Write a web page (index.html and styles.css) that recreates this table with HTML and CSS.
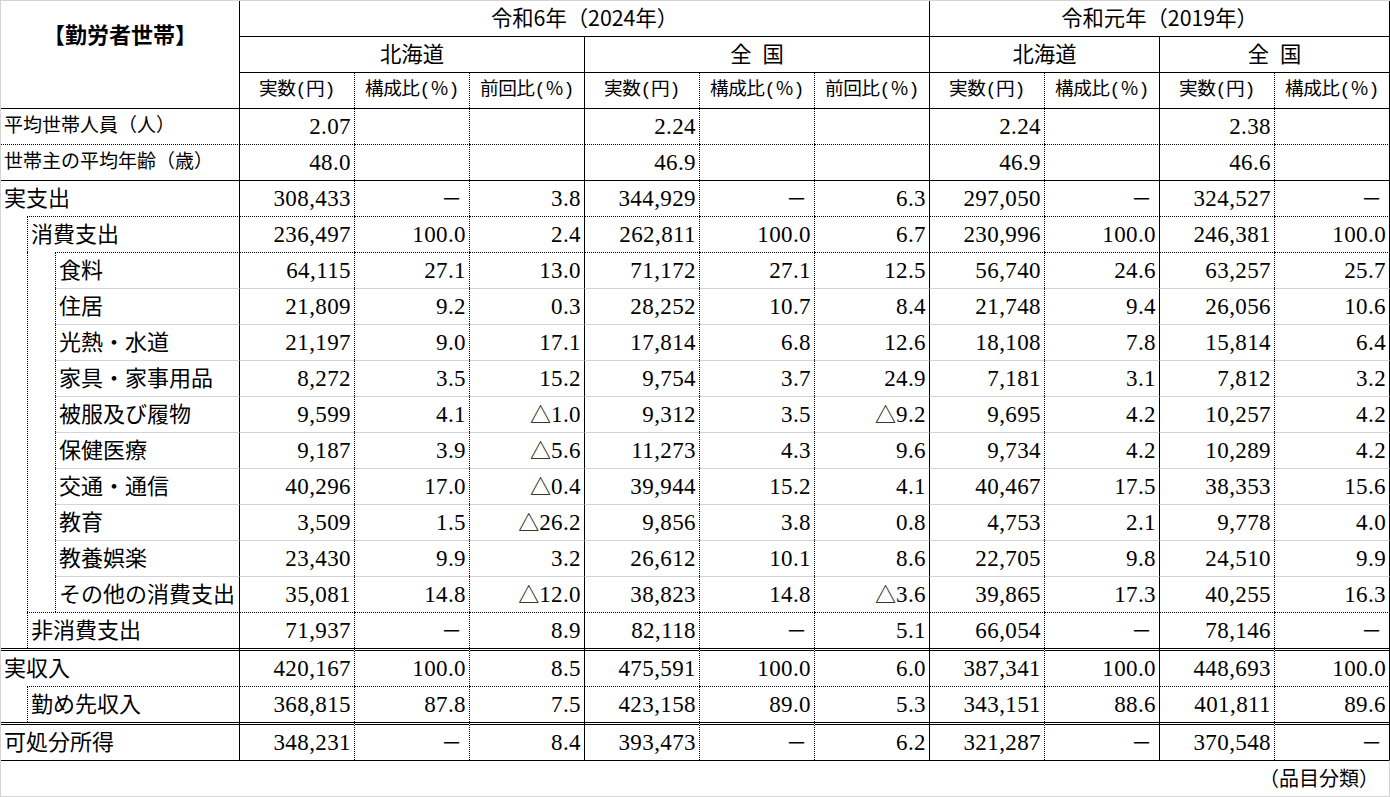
FILE: index.html
```html
<!DOCTYPE html>
<html lang="ja">
<head>
<meta charset="utf-8">
<title>勤労者世帯</title>
<link rel="stylesheet" href="styles.css">
</head>
<body>
<div class="sheet">
<table class="tbl">
<colgroup>
<col class="ca"><col class="cb"><col class="cc">
<col class="cn"><col class="cn"><col class="cn"><col class="cn"><col class="cn">
<col class="cn"><col class="cn"><col class="cn"><col class="cn"><col class="cn">
</colgroup>
<tbody>
<tr class="h35">
<td class="title s" colspan="3" rowspan="3">【勤労者世帯】</td>
<td class="hd s" colspan="6">令和6年（2024年）</td>
<td class="hd s" colspan="4">令和元年（2019年）</td>
</tr>
<tr class="h36 ts">
<td class="hd s" colspan="3">北海道</td>
<td class="hd s sp" colspan="3">全 国</td>
<td class="hd s" colspan="2">北海道</td>
<td class="hd s sp" colspan="2">全 国</td>
</tr>
<tr class="h36 ts">
<td class="hs d">実数(円)</td><td class="hs d">構成比(％)</td><td class="hs s">前回比(％)</td>
<td class="hs d">実数(円)</td><td class="hs d">構成比(％)</td><td class="hs s">前回比(％)</td>
<td class="hs d">実数(円)</td><td class="hs s">構成比(％)</td>
<td class="hs d">実数(円)</td><td class="hs s">構成比(％)</td>
</tr>

<tr class="h36 ts">
<td class="lab sm s" colspan="3">平均世帯人員（人）</td>
<td class="n d">2.07</td><td class="n d"></td><td class="n s"></td>
<td class="n d">2.24</td><td class="n d"></td><td class="n s"></td>
<td class="n d">2.24</td><td class="n s"></td>
<td class="n d">2.38</td><td class="n s"></td>
</tr>
<tr class="h36 tdt">
<td class="lab sm s" colspan="3">世帯主の平均年齢（歳）</td>
<td class="n d">48.0</td><td class="n d"></td><td class="n s"></td>
<td class="n d">46.9</td><td class="n d"></td><td class="n s"></td>
<td class="n d">46.9</td><td class="n s"></td>
<td class="n d">46.6</td><td class="n s"></td>
</tr>
<tr class="h36 ts">
<td class="lab s" colspan="3">実支出</td>
<td class="n d">308,433</td><td class="n d"><span class="dash">－</span></td><td class="n s">3.8</td>
<td class="n d">344,929</td><td class="n d"><span class="dash">－</span></td><td class="n s">6.3</td>
<td class="n d">297,050</td><td class="n s"><span class="dash">－</span></td>
<td class="n d">324,527</td><td class="n s"><span class="dash">－</span></td>
</tr>
<tr class="h36 tdt">
<td class="nt" rowspan="12"></td>
<td class="lab bl s" colspan="2">消費支出</td>
<td class="n d">236,497</td><td class="n d">100.0</td><td class="n s">2.4</td>
<td class="n d">262,811</td><td class="n d">100.0</td><td class="n s">6.7</td>
<td class="n d">230,996</td><td class="n s">100.0</td>
<td class="n d">246,381</td><td class="n s">100.0</td>
</tr>
<tr class="h36 tdt">
<td class="nt bl" rowspan="10"></td>
<td class="lab bl s">食料</td>
<td class="n d">64,115</td><td class="n d">27.1</td><td class="n s">13.0</td>
<td class="n d">71,172</td><td class="n d">27.1</td><td class="n s">12.5</td>
<td class="n d">56,740</td><td class="n s">24.6</td>
<td class="n d">63,257</td><td class="n s">25.7</td>
</tr>
<tr class="h36 tg">
<td class="lab bl s">住居</td>
<td class="n d">21,809</td><td class="n d">9.2</td><td class="n s">0.3</td>
<td class="n d">28,252</td><td class="n d">10.7</td><td class="n s">8.4</td>
<td class="n d">21,748</td><td class="n s">9.4</td>
<td class="n d">26,056</td><td class="n s">10.6</td>
</tr>
<tr class="h36 tg">
<td class="lab bl s">光熱・水道</td>
<td class="n d">21,197</td><td class="n d">9.0</td><td class="n s">17.1</td>
<td class="n d">17,814</td><td class="n d">6.8</td><td class="n s">12.6</td>
<td class="n d">18,108</td><td class="n s">7.8</td>
<td class="n d">15,814</td><td class="n s">6.4</td>
</tr>
<tr class="h36 tg">
<td class="lab bl s">家具・家事用品</td>
<td class="n d">8,272</td><td class="n d">3.5</td><td class="n s">15.2</td>
<td class="n d">9,754</td><td class="n d">3.7</td><td class="n s">24.9</td>
<td class="n d">7,181</td><td class="n s">3.1</td>
<td class="n d">7,812</td><td class="n s">3.2</td>
</tr>
<tr class="h36 tg">
<td class="lab bl s">被服及び履物</td>
<td class="n d">9,599</td><td class="n d">4.1</td><td class="n s"><span class="tri">△</span>1.0</td>
<td class="n d">9,312</td><td class="n d">3.5</td><td class="n s"><span class="tri">△</span>9.2</td>
<td class="n d">9,695</td><td class="n s">4.2</td>
<td class="n d">10,257</td><td class="n s">4.2</td>
</tr>
<tr class="h36 tg">
<td class="lab bl s">保健医療</td>
<td class="n d">9,187</td><td class="n d">3.9</td><td class="n s"><span class="tri">△</span>5.6</td>
<td class="n d">11,273</td><td class="n d">4.3</td><td class="n s">9.6</td>
<td class="n d">9,734</td><td class="n s">4.2</td>
<td class="n d">10,289</td><td class="n s">4.2</td>
</tr>
<tr class="h36 tg">
<td class="lab bl s">交通・通信</td>
<td class="n d">40,296</td><td class="n d">17.0</td><td class="n s"><span class="tri">△</span>0.4</td>
<td class="n d">39,944</td><td class="n d">15.2</td><td class="n s">4.1</td>
<td class="n d">40,467</td><td class="n s">17.5</td>
<td class="n d">38,353</td><td class="n s">15.6</td>
</tr>
<tr class="h36 tg">
<td class="lab bl s">教育</td>
<td class="n d">3,509</td><td class="n d">1.5</td><td class="n s"><span class="tri">△</span>26.2</td>
<td class="n d">9,856</td><td class="n d">3.8</td><td class="n s">0.8</td>
<td class="n d">4,753</td><td class="n s">2.1</td>
<td class="n d">9,778</td><td class="n s">4.0</td>
</tr>
<tr class="h36 tg">
<td class="lab bl s">教養娯楽</td>
<td class="n d">23,430</td><td class="n d">9.9</td><td class="n s">3.2</td>
<td class="n d">26,612</td><td class="n d">10.1</td><td class="n s">8.6</td>
<td class="n d">22,705</td><td class="n s">9.8</td>
<td class="n d">24,510</td><td class="n s">9.9</td>
</tr>
<tr class="h36 tg">
<td class="lab bl s">その他の消費支出</td>
<td class="n d">35,081</td><td class="n d">14.8</td><td class="n s"><span class="tri">△</span>12.0</td>
<td class="n d">38,823</td><td class="n d">14.8</td><td class="n s"><span class="tri">△</span>3.6</td>
<td class="n d">39,865</td><td class="n s">17.3</td>
<td class="n d">40,255</td><td class="n s">16.3</td>
</tr>
<tr class="h36 tdt">
<td class="lab bl s" colspan="2">非消費支出</td>
<td class="n d">71,937</td><td class="n d"><span class="dash">－</span></td><td class="n s">8.9</td>
<td class="n d">82,118</td><td class="n d"><span class="dash">－</span></td><td class="n s">5.1</td>
<td class="n d">66,054</td><td class="n s"><span class="dash">－</span></td>
<td class="n d">78,146</td><td class="n s"><span class="dash">－</span></td>
</tr>
<tr class="h38 tw">
<td class="lab s" colspan="3">実収入</td>
<td class="n d">420,167</td><td class="n d">100.0</td><td class="n s">8.5</td>
<td class="n d">475,591</td><td class="n d">100.0</td><td class="n s">6.0</td>
<td class="n d">387,341</td><td class="n s">100.0</td>
<td class="n d">448,693</td><td class="n s">100.0</td>
</tr>
<tr class="h36 tdt">
<td class="nt"></td>
<td class="lab bl s" colspan="2">勤め先収入</td>
<td class="n d">368,815</td><td class="n d">87.8</td><td class="n s">7.5</td>
<td class="n d">423,158</td><td class="n d">89.0</td><td class="n s">5.3</td>
<td class="n d">343,151</td><td class="n s">88.6</td>
<td class="n d">401,811</td><td class="n s">89.6</td>
</tr>
<tr class="h38 tw">
<td class="lab s" colspan="3">可処分所得</td>
<td class="n d">348,231</td><td class="n d"><span class="dash">－</span></td><td class="n s">8.4</td>
<td class="n d">393,473</td><td class="n d"><span class="dash">－</span></td><td class="n s">6.2</td>
<td class="n d">321,287</td><td class="n s"><span class="dash">－</span></td>
<td class="n d">370,548</td><td class="n s"><span class="dash">－</span></td>
</tr>
</tbody>
</table>
<div class="foot">（品目分類）</div>
</div>
</body>
</html>
```

FILE: styles.css
```css
* {
  box-sizing: border-box;
}

html,
body {
  margin: 0;
  padding: 0;
  background: #ffffff;
}

body {
  font-family: "Noto Sans CJK JP", sans-serif;
  color: #000000;
}

.sheet {
  width: 1390px;
  height: 797px;
  border-top: 1px solid #d4d4d4;
  border-left: 1px solid #d4d4d4;
  overflow: hidden;
}

.tbl {
  border-collapse: separate;
  border-spacing: 0;
  table-layout: fixed;
  width: 1389px;
}

.tbl td {
  padding: 0;
  vertical-align: middle;
  white-space: nowrap;
  line-height: 1.2;
}

col.ca { width: 26px; }
col.cb { width: 28px; }
col.cc { width: 185px; }
col.cn { width: 115px; }

tr.h35 { height: 35px; }
tr.h36 { height: 36px; }
tr.h38 { height: 38px; }

tr.ts > td { border-top: 1px solid #000000; }
tr.tdt > td { border-top: 1px dotted #000000; }
tr.tg > td { border-top: 1px solid #d4d4d4; }
tr.tw > td { border-top: 3px double #000000; }

.tbl td.nt { border-top: 0; }

.tbl td.d { border-right: 1px dotted #000000; }
.tbl td.s { border-right: 1px solid #000000; }
.tbl td.bl { border-left: 1px dotted #000000; }

.tbl td.title {
  vertical-align: top;
  text-align: center;
  font-weight: 700;
  font-size: 22px;
  line-height: 26px;
  padding-top: 19px;
}

.tbl td.hd {
  text-align: center;
  font-size: 21.33px;
  padding-bottom: 4px;
}

.sp {
  word-spacing: 6px;
}

.tbl td.hs {
  text-align: center;
  font-family: "Liberation Mono", "Noto Sans CJK JP", monospace;
  font-size: 18.67px;
  letter-spacing: -0.5px;
  padding-bottom: 1px;
}

.tbl td.lab {
  text-align: left;
  font-size: 22px;
  padding-left: 3px;
  padding-bottom: 5px;
}

.tbl td.lab.sm {
  font-size: 19px;
  padding-bottom: 4px;
}

.tbl td.n {
  text-align: right;
  font-family: "Liberation Serif", "Noto Sans CJK JP", serif;
  font-size: 23px;
  letter-spacing: 0.4px;
  padding-right: 3px;
}

.tri {
  font-family: "Noto Sans CJK JP", sans-serif;
  font-size: 21px;
  letter-spacing: 0;
}

.dash {
  font-family: "Noto Sans CJK JP", sans-serif;
  font-size: 21px;
  letter-spacing: 0;
  padding-right: 4px;
}

.foot {
  width: 1389px;
  height: 37px;
  border-top: 1px solid #000000;
  border-right: 1px solid #d4d4d4;
  border-bottom: 1px solid #d4d4d4;
  text-align: right;
  font-size: 20px;
  line-height: 34px;
  padding-right: 10px;
}
```
